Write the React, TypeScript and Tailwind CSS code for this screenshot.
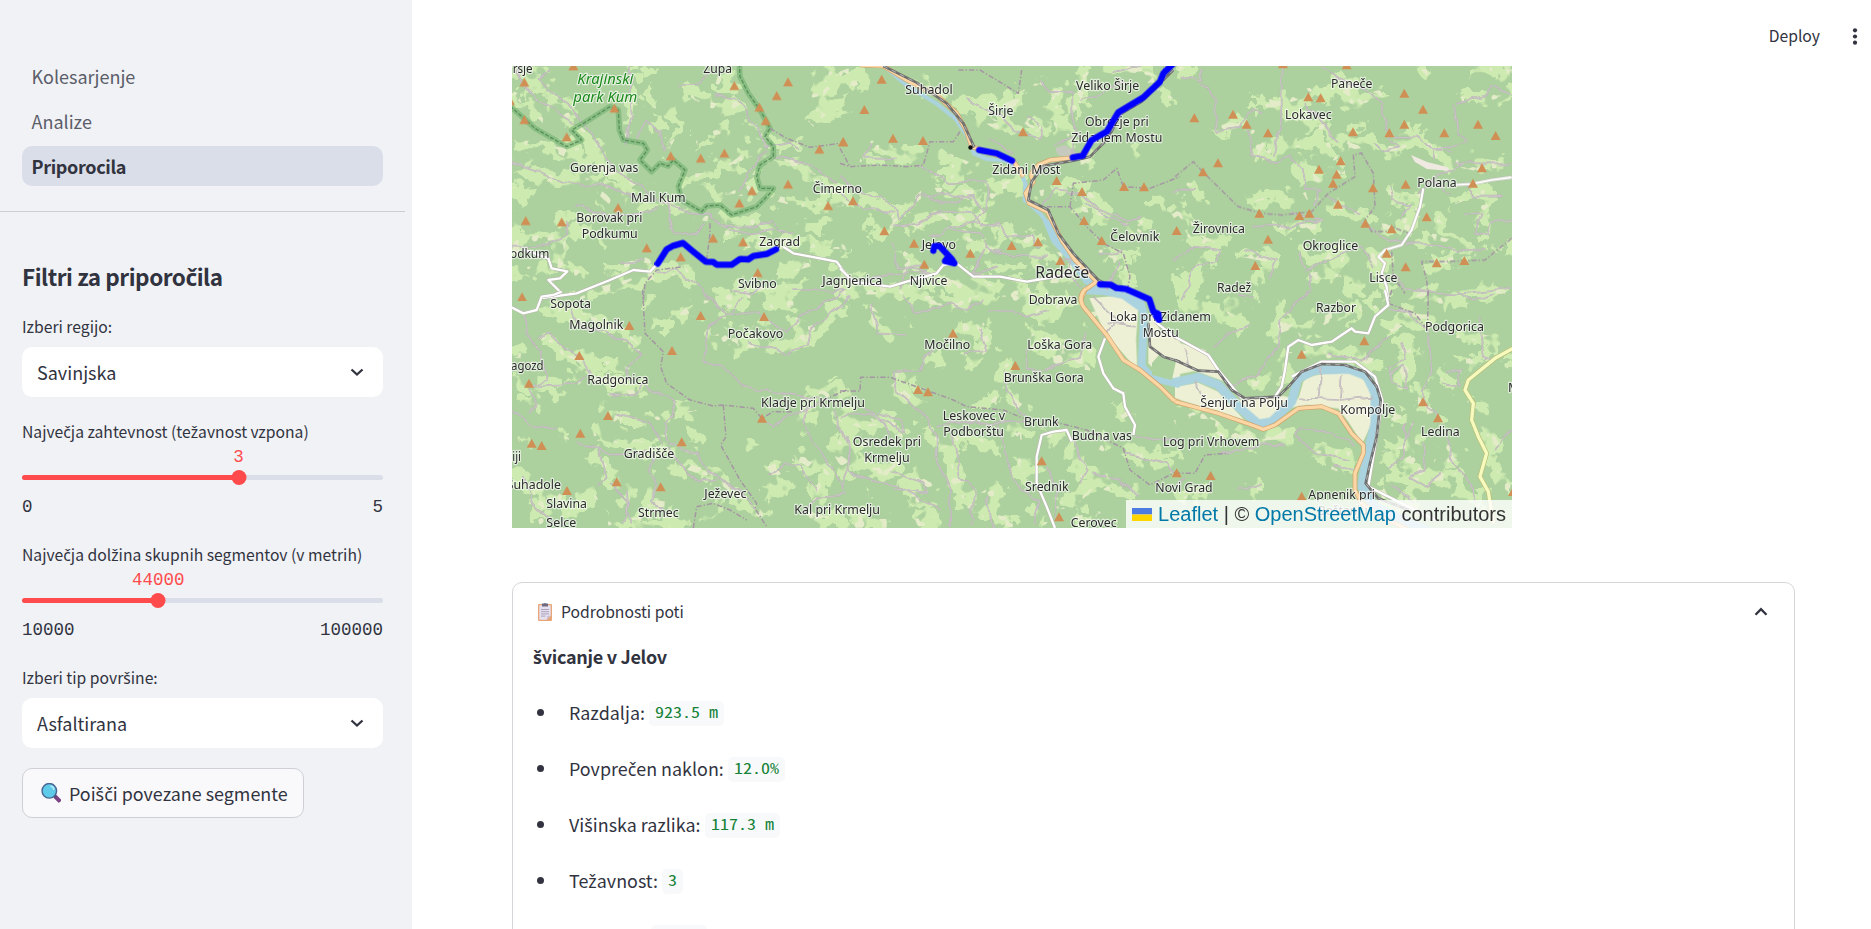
import React from "react";

type Mark = [number, number];
type Label = [number, number, number, string];
type Patch = [number, string];

interface Sheet {
  dx: number;
  dy: number;
  woods: Patch[];
  fields?: string;
  river?: Patch[];
  lanes: string;
  white?: string;
  orange?: string;
  yellow?: string;
  rail?: string;
  border?: string;
  peaks: Mark[];
  labels: Label[];
}

// Each sheet is drawn at three units per pixel and placed by its offset.
const sheets: Sheet[] = [
  {
    dx: -2,
    dy: -6,
    woods: [
      [34, "M10 20L60 60L100 50L130 120L190 190L230 230L270 290"],
      [26, "M10 100L90 170L120 200M120 30L60 110M20 250L100 250L180 290L240 290L330 360L420 400"],
      [34, "M0 300L60 340L180 370L280 350M100 270L220 275M290 380L380 400M0 390L70 400"],
      [24, "M365 20L370 150L340 230M390 30L450 50M410 90L440 170L440 220M480 150L500 210L470 270"],
      [40, "M540 90L580 130L640 150L690 120M620 60L690 80"],
      [24, "M610 220L660 205M620 280L650 285M500 350L620 345L700 290L760 270M560 250L600 230"],
      [48, "M920 40L970 50L920 110L960 150L1010 130M900 190L940 150M1000 30L1010 70"],
      [30, "M720 180L750 230L790 250L870 250M590 390L700 400L740 340M760 300L860 310L900 340L1020 430"],
      [28, "M780 410L900 440L1000 430M440 420L560 470L620 480L800 490M850 500L980 490M380 440L460 440"],
      [30, "M700 555L850 550L1020 560M640 520L700 520M0 540L150 530L220 520L320 530M160 540L150 620L230 650"],
      [34, "M0 640L120 620M290 640L400 600L480 640M200 710L420 650L520 630L560 690M660 710L700 690L900 690"],
      [30, "M960 620L1020 720M120 470L260 470M800 640L900 610M270 400L320 440M10 460L20 590"],
    ],
    lanes:
      "M20 20L60 100L190 190M120 30L80 60L170 130L260 240L320 340L400 380L450 430L540 460L600 465L640 500L720 500L790 490L820 520M360 20L365 170L345 250M405 180L450 210L460 270M400 185L380 240M0 305L90 335L160 370L300 375L380 420M505 75L560 75L600 30M620 110L680 120L740 200L770 270M690 400L720 330L770 275M790 290L900 315L980 370M470 430L490 520L560 520L590 490M620 490L660 510L720 520L790 510M440 635L500 630L560 670L600 720M850 690L1010 690M200 440L300 470L440 450M0 560L100 560L170 530L180 480M660 690L720 700L760 680M340 610L400 600M800 510L850 515M760 260L840 245L870 265",
    white:
      "M820 560L850 580L930 595L980 605L1020 660M40 568L115 595L125 625L172 634L150 655L115 660L155 700M95 714L200 700L300 660L370 630L420 635L443 611",
    border: "M600 490L600 520L590 600M400 720L405 670L440 630L520 620M780 205L830 235L900 262L990 250M990 265L1020 320",
    peaks: [
      [190, 18], [43, 67], [0, 122], [43, 179], [170, 231], [313, 145], [482, 288], [572, 295], [643, 280], [673, 77],
      [834, 66], [800, 107], [748, 142], [767, 182], [928, 268], [999, 246], [834, 373], [726, 392], [688, 430],
      [954, 437], [324, 443], [155, 486], [47, 482], [609, 535], [699, 546], [410, 564], [512, 591], [743, 638],
      [36, 711],
    ],
    labels: [
      [8, 38, 60, "ršje"], [580, 38, 86, "Župa"], [180, 335, 205, "Gorenja vas"], [363, 427, 164, "Mali Kum"],
      [199, 485, 198, "Borovak pri"], [215, 533, 168, "Podkumu"], [0, 594, 118, "odkum"], [908, 398, 148, "Čimerno"],
      [748, 558, 122, "Zagrad"], [684, 683, 116, "Svibno"], [937, 676, 180, "Jagnjenica"],
    ],
  },
  {
    dx: 328,
    dy: -6,
    woods: [
      [40, "M350 110L400 150L460 190L530 210M390 130L540 130M560 180L620 230"],
      [34, "M600 60L650 90L640 170L700 260M620 170L680 190M740 20L720 100L700 170M800 20L960 40M930 60L1000 130"],
      [34, "M30 20L60 60L20 80M180 50L240 60L320 110M90 250L160 280L230 290L200 260M110 240L130 270"],
      [30, "M260 300L330 290L420 330L460 400M260 350L360 350L330 290M200 440L260 390L400 400L440 470"],
      [34, "M60 420L130 440L180 450L130 520L80 500M420 440L480 380L540 360L530 400M210 500L300 470L420 480L470 520"],
      [30, "M480 500L560 540L600 530M600 400L720 370L760 420L740 460M640 380L700 390M700 440L830 470L900 520"],
      [30, "M860 490L910 490M930 420L980 420L1010 470M170 570L220 600L180 640M340 520L440 570L500 530"],
      [44, "M0 660L60 690L180 690L280 650L400 700L520 690M620 590L690 590L680 660L600 680M720 300L760 300"],
      [34, "M370 640L480 700L620 690M820 600L880 590M760 560L830 590M1000 640L1020 700M540 90L600 60M870 270L900 300"],
      [28, "M850 620L870 690M60 300L110 310M460 620L560 630L620 570"],
    ],
    river: [
      [12, "M135 20L200 76L290 131L345 175L380 225L402 280L440 297L500 302L540 330L556 370L554 420L600 460L630 500"],
      [24, "M620 480L645 540L690 590L740 660L780 690L850 705L900 740"],
    ],
    lanes:
      "M380 120L480 170L530 220L600 230L610 200M600 60L640 100L700 90L700 200L720 230M720 120L790 100L850 60M0 350L60 400L130 410L160 440L180 480L240 410L330 400L400 420M240 320L330 370L440 360L440 440L400 490M250 400L300 430L400 410L430 450M0 400L80 450L160 455M160 500L230 490L300 450L400 460L430 500L480 490L500 530L580 530L600 560M90 250L70 290L170 290M600 440L650 390L720 400L780 450L860 480L900 470M740 430L800 470L860 490M320 510L430 520L440 560L510 590L620 590M160 550L170 620L240 620M90 650L160 640L280 640M480 500L380 490L270 530M660 600L690 600L680 640L720 680M780 580L840 570M440 570L400 640L470 620M800 690L840 600M450 230L520 280M560 170L600 200M820 40L900 20M640 260L700 230L700 290M180 690L200 620L260 640",
    white: "M0 625L40 665L150 680L200 665L290 640L310 615L350 610L400 650L480 650L560 665L620 655L700 640",
    orange:
      "M60 15L130 18L200 60L290 105L350 160L378 210L395 260L470 285L520 302L550 350M572 342L595 315L630 300L700 293L745 275M572 342L580 365L557 400L567 430L622 455L665 540L705 600L770 665L735 690L722 720",
    rail:
      "M130 18L230 68L320 130L370 190L403 262M1000 30L905 125L845 160L800 240L750 290L700 302L610 318L575 365L565 420L625 450L655 520L700 580L775 660L830 690",
    border:
      "M0 310L30 320L120 315L200 320L250 315L260 280L270 245L340 245L360 215M355 30L420 30L535 100L545 30M690 440L700 370L790 360L830 325L850 380L930 385L1020 350M620 440L690 440L740 500L790 550L850 580L870 650L860 700",
    peaks: [
      [125, 58], [73, 149], [10, 246], [159, 235], [249, 242], [549, 216], [39, 423], [133, 513], [222, 550], [253, 613],
      [391, 580], [515, 557], [594, 546], [661, 602], [650, 362], [726, 395], [852, 380], [912, 381], [732, 482],
      [785, 542], [1010, 512],
    ],
    labels: [
      [196, 103, 142, "Suhadol"], [445, 166, 75, "Širje"], [708, 90, 190, "Veliko Širje"], [735, 197, 191, "Obrežje pri"],
      [694, 245, 273, "Zidanem Mostu"], [457, 343, 204, "Zidani Most"], [245, 567, 103, "Jelovo"],
      [209, 675, 113, "Njivice"], [811, 544, 147, "Čelovnik"],
    ],
  },
  {
    dx: 663,
    dy: -6,
    woods: [
      [40, "M10 30L60 40M240 130L320 130L380 180L450 200M330 120L420 90L540 110M480 50L560 120L620 100"],
      [34, "M120 210L200 190M220 200L260 250L230 300M260 290L350 250L450 250L480 300M490 90L540 130M590 240L640 270L720 240L790 260"],
      [40, "M680 220L740 230L800 300L900 320L980 310M20 370L90 400M360 300L400 340L440 380L390 410M460 330L510 330"],
      [34, "M220 420L300 400L370 430M440 400L480 450L560 460L600 490M640 380L650 430L740 410M730 430L690 490L700 520"],
      [34, "M880 390L960 410L900 460L940 520M780 530L800 470M620 500L680 510M40 520L130 560L70 640L30 720M0 440L50 500"],
      [36, "M200 580L300 600L280 640M380 600L500 580L480 640L400 650M500 640L560 700M560 560L620 620L640 700M740 530L880 560"],
      [34, "M750 610L850 600M700 700L860 700L990 690M990 550L1010 580M860 120L950 110L1010 90M900 30L1010 30M730 20L760 40"],
      [28, "M450 210L530 260L600 250M830 430L890 400M300 500L440 500M880 600L960 560M240 660L300 620M530 210L560 200M740 190L730 240"],
    ],
    lanes:
      "M80 20L80 60L20 50M80 70L120 120L125 210L200 200L225 150L260 160M320 20L320 140L310 220L300 290M220 190L230 290L300 310L340 290L380 320L390 380L440 390L410 440M440 20L500 60L580 90L620 130L630 210L670 260L620 270L600 250M390 130L450 200L490 250M660 230L730 230L780 270L830 270M840 130L850 220L870 240L780 270L780 300M850 130L930 110L950 80L1010 100M0 400L60 380M460 410L500 440L560 460M560 490L620 530L690 545M830 310L920 310L1010 310M730 400L780 350L870 310M770 370L830 400M870 460L920 460L900 520L940 530L950 490L1010 480M690 550L780 550L840 570L930 570M0 600L60 560L140 570L130 600L60 620L20 720M210 570L300 600L280 650M370 570L390 630L480 590L560 560L600 620M400 640L410 690L370 720M650 640L690 690L840 700L1010 680M240 500L320 500L440 480L350 460M640 380L650 420L700 430L680 480M230 710L190 700M860 370L900 410L980 410",
    white:
      "M1010 352L950 360L890 372L840 375M745 385L735 440L710 510L680 555L630 570L610 590L630 610L620 640L635 680L640 725",
    border:
      "M0 350L55 305L84 336L190 440L260 460L320 465L410 455L460 400L540 350L535 285L560 280L595 340L600 440L570 480L590 515L640 515L650 500L700 520M650 575L655 650L690 700M1010 535L930 600L800 605L740 605L755 660L760 720",
    peaks: [
      [324, 12], [515, 15], [400, 111], [437, 114], [58, 174], [174, 163], [215, 193], [279, 219], [534, 216],
      [643, 219], [688, 193], [688, 100], [744, 148], [808, 219], [909, 193], [962, 227], [129, 309], [84, 336],
      [497, 303], [432, 328], [485, 343], [474, 370], [489, 433], [594, 384], [692, 373], [921, 324], [894, 370],
      [253, 460], [373, 467], [403, 460], [571, 490], [650, 507], [755, 471], [279, 538], [241, 617], [635, 580],
      [692, 621], [785, 609], [868, 602],
    ],
    labels: [
      [468, 83, 124, "Paneče"], [330, 178, 140, "Lokavec"], [53, 518, 157, "Žirovnica"], [383, 571, 167, "Okroglice"],
      [727, 382, 118, "Polana"], [583, 667, 84, "Lisce"], [126, 695, 103, "Radež"],
    ],
  },
  {
    dx: -2,
    dy: 224,
    woods: [
      [34, "M90 60L220 80L330 120L390 180M100 140L150 180L240 220L370 230M240 260L390 280L380 310L310 310"],
      [34, "M0 190L60 200L50 280L150 290L150 320M430 110L480 110M420 60L400 40M480 70L560 60M580 40L700 60"],
      [50, "M600 110L650 160L730 160L860 170L930 100L1000 50M780 40L850 40M620 20L720 10M870 80L900 150"],
      [38, "M290 350L320 390M330 390L440 390L470 440M250 440L340 450L480 490L560 500M480 370L560 350M520 430L570 440"],
      [32, "M30 440L50 480M150 430L180 440M250 480L300 560L350 560L340 650M500 520L600 550L670 600L760 680M700 460L740 480"],
      [42, "M20 550L80 600L100 700M120 590L180 660L260 620M420 560L420 640L480 650M750 610L820 590L780 520"],
      [40, "M850 500L950 540L930 600L900 680L1000 700M900 320L1000 300M910 350L880 410M1000 360L1020 470M960 450L1000 520"],
      [28, "M280 700L400 690L520 710M580 700L640 640M700 120L760 100M960 260L970 270M40 320L80 350M180 250L210 280"],
    ],
    lanes:
      "M40 75L50 130L90 180L110 270L60 290L190 285L240 250M90 150L110 130L170 180L220 210L240 250M180 50L200 100L290 130L350 145L395 190L355 230L360 270M300 320L380 310L390 280L450 310L500 340L490 375L460 400L480 460L560 490L600 550L690 600L740 660M0 360L60 400L140 415M60 300L80 340L60 370M320 370L400 390L450 440L460 470M430 490L420 540L440 580L420 640L460 650M480 470L520 540L570 580L620 570M200 460L250 470L300 490L340 500L410 480M270 480L290 560L260 590M300 580L360 640L340 700M40 560L70 640L130 700M580 0L650 70L740 70L830 130L870 80L1010 0M650 75L590 110L580 210L660 250L700 285L760 300L880 320L930 330M700 20L670 70M720 160L830 185L890 170L900 120L1020 20M756 385L790 410L830 380L930 340M890 350L880 400L940 500L1000 600M780 560L830 520L870 530L920 600M970 360L1010 460M880 670L930 620L1010 610M350 600L360 700",
    white: "M0 50L40 70L80 60L95 20L130 15L155 5",
    border:
      "M398 0L405 130L460 185L452 230L470 280L540 330L610 348L640 345L730 355L756 385L790 365L850 365M640 345L648 440L632 465L690 570L740 640L735 655L770 710M550 714L560 650L610 640L660 660L710 690M940 330L1010 300",
    peaks: [
      [358, 107], [208, 197], [486, 182], [572, 77], [762, 80], [57, 280], [294, 377], [211, 430], [65, 460], [95, 467],
      [515, 456], [756, 385], [320, 576], [171, 602], [452, 591],
    ],
    labels: [
      [121, 55, 122, "Sopota"], [178, 116, 162, "Magolnik"], [653, 144, 167, "Počakovo"], [3, 240, 98, "agozd"],
      [232, 282, 183, "Radgonica"], [753, 352, 312, "Kladje pri Krmelju"], [7, 514, 26, "iji"],
      [341, 503, 152, "Gradišče"], [-10, 597, 163, "Suhadole"], [109, 653, 122, "Slavina"], [109, 711, 90, "Selce"],
      [583, 624, 126, "Ježevec"], [384, 682, 122, "Strmec"], [853, 671, 257, "Kal pri Krmelju"],
    ],
  },
  {
    dx: 328,
    dy: 224,
    woods: [
      [40, "M100 40L110 100L200 120M200 20L340 40L420 20M420 100L440 170L380 220M350 100L420 140"],
      [42, "M280 200L300 240M170 250L230 270M550 60L640 60L700 20M570 130L690 190L740 220M640 210L750 190L740 240"],
      [34, "M500 220L480 300L540 350M430 320L470 330M540 440L600 430L680 440M350 380L400 400M160 280L250 370"],
      [38, "M0 380L60 400L160 390L190 440M60 440L40 500L130 550L180 500M260 420L340 500L360 600M320 450L440 460L480 480"],
      [42, "M180 560L260 580L280 620M200 600L280 660M500 400L540 430M540 500L560 560L600 540M700 480L740 540L700 560"],
      [38, "M830 340L870 400M860 470L960 520L1000 540M780 480L800 440M640 650L700 640L760 580L840 600L880 610"],
      [44, "M380 650L460 600L440 680L520 700M100 640L40 700L140 700M220 700L300 690M0 450L20 560M340 560L400 650"],
      [28, "M760 60L780 110M560 640L620 700M700 690L820 660M460 0L540 30L620 70M940 500L1010 480"],
    ],
    fields:
      "M748 25L860 15L895 55L888 150L892 235L868 212L840 180L795 130ZM935 60L960 120L1020 150L1020 270L960 255L925 220L925 120Z",
    river: [[24, "M730 0L780 2L850 5L900 35L912 75L905 230L935 262L1020 282"]],
    lanes:
      "M100 40L110 130L200 135M190 20L220 70L330 40L380 60L430 30M440 60L520 60L560 80L630 60M420 120L440 180L370 190M280 170L240 240L160 240L170 300L260 380L290 440L290 500L330 600L330 714M0 380L80 370L130 390L190 430L180 390L110 370M70 350L130 400L150 450M290 410L360 400L560 395M330 410L360 560L400 600L400 700M480 400L490 490L540 600M500 300L540 350L560 385M490 240L500 300M560 180L560 240L610 240L720 200L740 120M20 440L30 540L60 560L190 600L300 660M160 540L250 580L260 610L160 600M0 600L30 520M700 450L740 540L720 580M620 530L650 600L640 680M880 437L940 455L1020 450M750 550L840 570L890 610M760 20L830 90L790 140M800 100L890 110M440 620L460 714M540 600L600 630L580 700M860 490L980 520L1000 550",
    white:
      "M795 145L775 200L790 250L820 295L850 310L855 350L885 405L880 435M695 455L680 420L640 425L605 435L590 500L590 580L620 650L645 714M945 95L1010 145",
    orange: "M738 -5Q712 20 730 50L800 135L850 210L900 240L960 290L1000 330L1020 338",
    rail: "M925 100L930 170L970 200L1020 215",
    border:
      "M0 303L60 303L62 262L150 262L230 290L340 330L380 350L490 360L550 385M640 395L740 420L850 475L870 540L930 585L1010 545",
    peaks: [[339, 130], [526, 227], [234, 299], [264, 306], [605, 513], [657, 681], [1010, 549]],
    labels: [
      [566, 42, 146, "Dobrava"], [253, 177, 138, "Močilno"], [562, 177, 195, "Loška Gora"],
      [491, 276, 240, "Brunška Gora"], [809, 94, 304, "Loka pri Zidanem"], [908, 142, 108, "Mostu"],
      [308, 389, 187, "Leskovec v"], [310, 437, 182, "Podborštu"], [552, 407, 104, "Brunk"],
      [695, 450, 181, "Budna vas"], [38, 468, 205, "Osredek pri"], [73, 517, 136, "Krmelju"],
      [555, 603, 131, "Srednik"], [969, 468, 289, "Log pri Vrhovem"], [946, 605, 172, "Novi Grad"],
      [692, 712, 138, "Cerovec"],
    ],
  },
  {
    dx: 663,
    dy: 224,
    woods: [
      [40, "M0 50L120 50L200 110M240 10L120 60M320 30L310 150M350 90L310 140M370 130L470 80L560 60"],
      [44, "M230 280L320 260L340 200L480 190L560 210L640 230M640 120L700 80L760 90M690 150L700 220L660 280L700 330"],
      [36, "M760 30L880 30M830 130L960 150L930 200M840 280L790 250M740 280L740 340L800 400M650 380L740 400L720 460L640 470"],
      [42, "M630 480L660 560L740 580L700 640M700 500L740 560L840 560L880 640M100 390L160 430L260 440L360 430M410 480L540 500"],
      [36, "M470 530L520 540M190 590L270 590M0 620L100 600M880 330L960 460L960 560L1010 600M800 460L840 500L780 520"],
      [30, "M990 200L1010 240M580 20L600 60M860 220L930 200M920 600L900 700M0 400L70 370L150 440M610 580L640 640L730 660"],
    ],
    fields:
      "M0 155L90 180L135 255L190 330L325 318L345 322L290 385L250 395L200 345L150 275L60 243L0 255ZM0 290L70 278L130 305L210 392L160 375L0 325ZM385 275Q400 248 520 248Q580 258 590 320L590 400L562 460L520 395L490 355L400 345L350 352L372 320Z",
    river: [
      [
        27,
        "M0 277L70 262L130 285L190 350L250 402L290 395L350 335L368 265L420 240L520 237L575 258L600 310L600 400L575 500L560 590L600 650L760 724",
      ],
    ],
    lanes:
      "M400 0L320 90L310 170M120 170L170 120L220 110M310 170L240 260L150 290M440 230L430 330M500 250L495 330L590 320M370 325L490 330M60 270L80 310M30 180L40 230M640 60L700 70L760 120L770 240L740 300L760 360L790 380M680 150L700 210L640 230L650 280L700 290L690 230L640 250M850 0L890 30L960 10M910 80L930 200L960 210M810 250L860 240L850 290L800 280M360 430L380 410L470 430L540 470M360 430L420 490L530 510M690 400L690 500L640 530M720 400L690 440M740 460L750 540L700 560L750 590L800 550M820 440L830 520L870 560L900 640M200 480L140 490M330 470L260 460L200 480M460 190L560 215L600 180L640 140M480 530L540 540M650 590L720 640M190 600L260 580M0 590L30 560M960 480L1010 420",
    white:
      "M630 0L640 45L600 80L580 130L540 125L530 115L470 155L410 165L370 150L340 170L330 240L320 290L300 320M0 140L100 195L130 240L200 325M350 260L440 215L540 215L600 260L622 330L600 470L580 590L700 650L780 690",
    orange:
      "M0 335L130 370L230 405L265 418L300 405L370 355L440 350L490 370L530 430L565 465L565 490L540 550L540 600L560 640L620 680L700 720",
    yellow: "M1020 172L960 205L880 270L870 300L895 340L890 390L910 440L935 490L915 560L940 605L955 700",
    rail:
      "M0 210L70 242L130 245L170 300L210 325L310 320L345 285L380 245L440 222L510 225L570 245L605 290L617 330L605 440L585 520L572 580L610 625L700 660",
    border: "M0 550L60 550L90 495L160 490M640 40L720 70L750 110M760 0L758 90M650 0L640 40",
    peaks: [[568, 153], [380, 193], [744, 336], [789, 384], [107, 557], [380, 619], [1014, 605]],
    labels: [
      [423, 67, 120, "Razbor"], [750, 123, 177, "Podgorica"], [76, 350, 263, "Šenjur na Polju"],
      [496, 371, 165, "Kompolje"], [738, 438, 116, "Ledina"], [999, 305, 35, "M"], [400, 626, 200, "Apnenik pri"],
      [428, 676, 150, "Boštanju"],
    ],
  },
];

const routes =
  "M443 611L470 568L490 557L519 549L550 575L587 605L610 606L620 614L665 614L690 597L715 598L730 588L770 582L798 568M1407 270L1460 280L1506 302M1688 292L1718 287L1745 240L1790 215L1825 157L1900 112L1950 65L1960 40L1996 5M1270 572L1273 558L1288 558L1325 597L1333 610L1305 603L1315 590M1770 673L1802 674L1820 684L1848 687L1918 718L1930 755L1945 762L1947 780L1938 768";

const parkEdge =
  "M0 138L75 205L170 260L215 240L185 210L220 190L300 140L325 150L328 210L340 240L400 250L412 270L390 300L425 335L450 310L475 318L490 300L525 330L505 380L515 420L575 455L590 438L630 435L665 465L740 440L780 400L790 385L750 385L740 350L750 315L790 290L790 260L765 230L780 205L750 150L715 100L690 50L688 10";

function place(s: Sheet) {
  return `translate(${s.dx} ${s.dy}) scale(.33333)`;
}

function layer(pick: (s: Sheet) => React.ReactNode) {
  return sheets.map((s, i) => (
    <g key={i} transform={place(s)}>
      {pick(s)}
    </g>
  ));
}

function Lines({ d, c, w, dash }: { d?: string; c: string; w: number; dash?: string }) {
  return d ? <path d={d} stroke={c} strokeWidth={w} strokeDasharray={dash} /> : null;
}

function TerrainMap() {
  return (
    <svg viewBox="0 0 1000 462" className="block h-full w-full bg-[#add19e]" fill="none" strokeLinejoin="round">
      <defs>
        <filter id="ragged" x="0" y="0" width="1000" height="462" filterUnits="userSpaceOnUse" colorInterpolationFilters="sRGB">
          <feTurbulence type="fractalNoise" baseFrequency=".06" numOctaves="3" seed="7" result="n" />
          <feDisplacementMap in="SourceGraphic" in2="n" scale="30" xChannelSelector="R" yChannelSelector="G" result="d" />
          <feTurbulence type="fractalNoise" baseFrequency=".035" numOctaves="3" seed="21" result="m" />
          <feColorMatrix in="m" values="0 0 0 0 0 0 0 0 0 0 0 0 0 0 0 18 0 0 0 -7.4" result="mask" />
          <feComposite in="d" in2="mask" operator="in" />
        </filter>
        <filter id="speckle" x="0" y="0" width="1000" height="462" filterUnits="userSpaceOnUse" colorInterpolationFilters="sRGB">
          <feTurbulence type="fractalNoise" baseFrequency=".09" numOctaves="2" seed="4" result="m" />
          <feColorMatrix in="m" values="0 0 0 0 0 0 0 0 0 0 0 0 0 0 0 0 16 0 0 -9.6" result="mask" />
          <feComposite in="SourceGraphic" in2="mask" operator="in" />
        </filter>
        <filter id="wobble" x="0" y="0" width="1000" height="462" filterUnits="userSpaceOnUse">
          <feTurbulence type="fractalNoise" baseFrequency=".06" numOctaves="2" seed="12" result="n" />
          <feDisplacementMap in="SourceGraphic" in2="n" scale="9" xChannelSelector="R" yChannelSelector="G" />
        </filter>
      </defs>
      <g filter="url(#ragged)">
        {layer((s) => s.woods.map(([w, d], i) => <path key={i} d={d} stroke="#cdebb0" strokeWidth={w * 1.12} />))}
      </g>
      <g filter="url(#speckle)">
        {layer((s) => s.woods.map(([w, d], i) => <path key={i} d={d} stroke="#e3ebc8" strokeWidth={w * 0.6} />))}
      </g>
      {layer((s) => s.fields && <path d={s.fields} fill="#eef0d5" />)}
      {layer((s) => s.river?.map(([w, d], i) => <path key={i} d={d} stroke="#aad3df" strokeWidth={w} />))}
      <path d="M640 297l7 -8 17 6 -4 19 -20 -5z" fill="#add19e" />
      <path d="M543 82l10 -3 10 7 -8 6 -9 -3z" fill="#c6c9bd" />
      <path d="M899 89l16 7 20 5 4 4 -24 -2 -12 -7z" fill="#f0e9e2" />
      <g filter="url(#wobble)">
        {layer((s) => (
          <>
            <Lines d={s.lanes} c="#b9b0b6" w={5} />
            <Lines d={s.lanes} c="#d8d3d4" w={1.8} />
          </>
        ))}
      </g>
      <g transform="translate(-2 -6) scale(.33333)">
        <path d={parkEdge} stroke="#6fb06f" strokeWidth="17" strokeOpacity=".6" />
        <path d={parkEdge} stroke="#5c8f5c" strokeWidth="4" strokeDasharray="12 5" />
      </g>
      {layer((s) => (
        <>
          <Lines d={s.border} c="#a596a4" w={4.5} dash="16 6 4 6" />
          <Lines d={s.white} c="#b9b3b0" w={10} />
          <Lines d={s.white} c="#ffffff" w={7} />
          <Lines d={s.yellow} c="#b9bd72" w={14} />
          <Lines d={s.yellow} c="#f7fabf" w={10} />
          <Lines d={s.orange} c="#cfa36a" w={14} />
          <Lines d={s.orange} c="#fcd6a4" w={10} />
          <Lines d={s.rail} c="#707070" w={8} />
          <Lines d={s.rail} c="#b5b5b5" w={3} dash="14 14" />
        </>
      ))}
      {layer((s) =>
        s.peaks.map(([x, y], i) => <path key={i} d={`M${x - 15} ${y + 13}L${x} ${y - 14}L${x + 15} ${y + 13}Z`} fill="#d08f55" />),
      )}
      <circle cx="458.500" cy="81.500" r="2.200" fill="#111" />
      <g className="font-['Noto_Sans',sans-serif]" fill="#2b2b2b" stroke="#ffffff" strokeOpacity=".65" strokeWidth="7" paintOrder="stroke" fontSize="40">
        {layer((s) =>
          s.labels.map(([x, y, w, t]) => (
            <text key={t} x={x} y={y} textLength={w} lengthAdjust="spacingAndGlyphs">
              {t}
            </text>
          )),
        )}
        <g transform="translate(-2 -6) scale(.33333)">
          <g fill="#1c8a1c" fontStyle="italic" fontSize="43">
            <text x="202" y="72" textLength="168" lengthAdjust="spacingAndGlyphs">Krajinski</text>
            <text x="190" y="125" textLength="192" lengthAdjust="spacingAndGlyphs">park Kum</text>
          </g>
          <text x="1576" y="654" fontSize="48" textLength="162" lengthAdjust="spacingAndGlyphs">Radeče</text>
        </g>
      </g>
      <path transform="translate(-2 -6) scale(.33333)" d={routes} stroke="#0000ff" strokeWidth="19" strokeLinecap="round" />
    </svg>
  );
}

// The body face has no caron letters, so those are set in Noto Sans.
function Txt({ children }: { children: string }) {
  return (
    <span className="whitespace-nowrap">
      {children.split(/([čšžČŠŽ]+)/).map((part, i) =>
        i % 2 ? (
          <span key={i} className="font-['Noto_Sans',sans-serif] leading-none">
            {part}
          </span>
        ) : (
          part
        ),
      )}
    </span>
  );
}

// Widens the half-em figures of the mono face to a 0.6em pitch.
function Mono({ text, advance }: { text: string; advance: number }) {
  return (
    <span className="inline-block whitespace-pre" style={{ width: text.length * advance }}>
      <span className="inline-block origin-left scale-x-[1.2] font-['Noto_Sans_Mono_CJK_SC','Liberation_Mono',monospace]">
        {text}
      </span>
    </span>
  );
}

function Chevron({ up = false }: { up?: boolean }) {
  return (
    <svg viewBox="0 0 14 10" className="h-[10px] w-[14px]" fill="none" stroke="#31333f" strokeWidth="2.3">
      <path d={up ? "M1.500 7.700L7 2.200L12.500 7.700" : "M1.500 2.500L7 7.500L12.500 2.500"} />
    </svg>
  );
}

function Magnifier() {
  return (
    <svg viewBox="0 0 20 20" className="h-5 w-5">
      <path d="M13 12.500l2 -1 5 5q.5 2.500 -2.500 3.200l-5 -5z" fill="#7b4383" />
      <path d="M12 13l1.500 -1.500 2 2 -1.500 1.500z" fill="#4b4a78" />
      <circle cx="8.300" cy="7.800" r="7.300" fill="#5fcbe8" stroke="#4a6592" strokeWidth="1.400" />
      <path d="M10 3.200q2.500 .8 2.800 3" fill="none" stroke="#c4effa" strokeWidth="1.400" strokeLinecap="round" />
    </svg>
  );
}

function Clipboard() {
  return (
    <svg viewBox="0 0 14 18" className="h-[18px] w-[14px]">
      <rect x="0" y="1" width="14" height="17" rx="1" fill="#e8a678" />
      <path d="M1.300 2.200h11.400v10.300l-4 4.300h-7.400z" fill="#e6e1ef" />
      <path d="M8.700 16.800l.5 -3.800 3.500 -.5z" fill="#c9bfd6" />
      <path d="M4 .5h1.700q1.300 -1 2.600 0h1.700v3h-6z" fill="#6f6a80" />
      <path d="M3 6.500h8M3 8.700h8M3 10.900h8M3 13.100h4.500" stroke="#a49bb5" strokeWidth=".9" />
    </svg>
  );
}

function NavItem({ label, active = false }: { label: string; active?: boolean }) {
  return (
    <a
      className={
        active
          ? "flex h-10 items-center rounded-[10px] bg-[#dadee8] px-[9.500px] pb-px text-[18px] font-bold tracking-[-0.35px] text-[#31333f]"
          : "flex h-10 items-center rounded-[10px] px-[9.500px] pb-px text-[18px] text-[#5b5d68]"
      }
    >
      {label}
    </a>
  );
}

function Select({ label, value }: { label: string; value: string }) {
  return (
    <div>
      <div className="flex h-[30px] items-center text-[15.700px]">
        <Txt>{label}</Txt>
      </div>
      <div className="mt-[5px] flex h-[50px] items-center justify-between rounded-[10px] bg-white pr-[19px] pl-[15px] text-[18px]">
        <span>{value}</span>
        <Chevron />
      </div>
    </div>
  );
}

function Slider({ label, value, min, max }: { label: string; value: number; min: number; max: number }) {
  const pct = ((value - min) / (max - min)) * 100;
  return (
    <div className="h-[103px]">
      <div className="flex h-[30px] items-center text-[15.700px]">
        <Txt>{label}</Txt>
      </div>
      <div className="relative mt-[28px] h-[5px] rounded-full bg-[#dadee8]">
        <div className="h-full rounded-full bg-[#ff4b4b]" style={{ width: `${pct}%` }} />
        <div
          className="absolute top-[-5px] h-[15px] w-[15px] -translate-x-1/2 rounded-full bg-[#ff4b4b]"
          style={{ left: `${pct}%` }}
        />
        <div
          className="absolute top-[-30px] -translate-x-1/2 font-['Liberation_Mono',monospace] text-[17.500px] leading-[24px] text-[#ff4b4b]"
          style={{ left: `${pct}%` }}
        >
          {value}
        </div>
      </div>
      <div className="mt-[15px] flex h-[24px] items-center justify-between font-['Liberation_Mono',monospace] text-[17.500px] leading-[24px]">
        <span>{min}</span>
        <span>{max}</span>
      </div>
    </div>
  );
}

function Sidebar() {
  return (
    <aside className="h-full w-[412px] shrink-0 bg-[#f0f2f6]">
      <nav className="flex flex-col gap-[5px] pt-14 pr-[29px] pl-[22px]">
        <NavItem label="Kolesarjenje" />
        <NavItem label="Analize" />
        <NavItem label="Priporocila" active />
      </nav>
      <div className="mt-[25px] mr-[7px] h-px bg-[#cbcdd2]" />
      <div className="pr-[29px] pl-[22px]">
        <h2 className="mt-[45px] flex h-10 items-center text-[22.500px] font-bold tracking-[-0.450px]">
          <Txt>Filtri za priporočila</Txt>
        </h2>
        <div className="mt-[15px] flex flex-col gap-5">
          <Select label="Izberi regijo:" value="Savinjska" />
          <Slider label="Največja zahtevnost (težavnost vzpona)" value={3} min={0} max={5} />
          <Slider label="Največja dolžina skupnih segmentov (v metrih)" value={44000} min={10000} max={100000} />
          <Select label="Izberi tip površine:" value="Asfaltirana" />
          <button className="flex h-[50px] w-[282px] items-center gap-[8px] rounded-[10px] border border-[#cfd0d6] bg-[#f9f9fb] pl-[18px] text-[17.900px] whitespace-nowrap">
            <Magnifier />
            <Txt>Poišči povezane segmente</Txt>
          </button>
        </div>
      </div>
    </aside>
  );
}

function Detail({ label, value }: { label: string; value: string }) {
  return (
    <li className="flex h-[56px] items-start">
      <span className="mt-[9px] ml-[4px] h-[7px] w-[7px] rounded-full bg-[#31333f]" />
      <span className="ml-[25px] h-6 text-[17.900px] leading-[24px] whitespace-nowrap">
        <Txt>{label}</Txt>
      </span>
      <code className="mt-px ml-[4px] flex h-[25px] items-center rounded-[5px] bg-[#f8f9fb] px-[6px] text-[15px] text-[#158237]">
        <Mono text={value} advance={9} />
      </code>
    </li>
  );
}

export default function App() {
  return (
    <div className="flex h-[929px] w-[1871px] overflow-hidden bg-white font-['Noto_Sans_CJK_SC',sans-serif] leading-[24px] text-[#31333f]">
      <Sidebar />
      <main className="flex min-w-0 grow flex-col">
        <header className="flex h-[66px] shrink-0 items-start justify-end pr-[13px]">
          <span className="mt-6 text-[15.700px]">Deploy</span>
          <svg viewBox="0 0 6 18" className="mt-[27px] ml-[32px] h-[18px] w-[6px]" fill="#31333f">
            <circle cx="3" cy="3.300" r="2.100" />
            <circle cx="3" cy="9.500" r="2.100" />
            <circle cx="3" cy="15.700" r="2.100" />
          </svg>
        </header>
        <div className="relative ml-[100px] h-[462px] w-[1000px] shrink-0 overflow-hidden">
          <TerrainMap />
          <div className="absolute right-0 bottom-0 flex h-7 items-center bg-white/80 pr-[6px] pl-[6px] font-['Liberation_Sans',Arial,sans-serif] text-[20px] whitespace-pre text-[#333333]">
            <svg viewBox="0 0 20 13" className="mr-[6px] h-[13px] w-5">
              <path d="M0 0h20v6.500h-20z" fill="#4c7be1" />
              <path d="M0 6.500h20v6.500h-20z" fill="#ffd500" />
            </svg>
            <span className="text-[#0078a8]">Leaflet</span>
            <span> | © </span>
            <span className="text-[#0078a8]">OpenStreetMap</span>
            <span> contributors</span>
          </div>
        </div>
        <section className="mt-[54px] ml-[100px] h-[500px] w-[1283px] shrink-0 rounded-[10px] border border-[#d5d6d9] pr-[26px] pl-5">
          <div className="flex h-[58px] items-center justify-between">
            <div className="flex items-center gap-[9px] pl-[5px] text-[15.700px]">
              <Clipboard />
              <span>Podrobnosti poti</span>
            </div>
            <Chevron up />
          </div>
          <h3 className="mt-[3px] h-6 text-[18px] font-bold tracking-[-0.3px]">
            <Txt>švicanje v Jelov</Txt>
          </h3>
          <ul className="mt-[32px]">
            <Detail label="Razdalja:" value="923.5 m" />
            <Detail label="Povprečen naklon:" value="12.0%" />
            <Detail label="Višinska razlika:" value="117.3 m" />
            <Detail label="Težavnost:" value="3" />
          </ul>
          <div className="mt-px ml-[118px] h-[25px] w-[56px] rounded-[5px] bg-[#f8f9fb]" />
        </section>
      </main>
    </div>
  );
}
